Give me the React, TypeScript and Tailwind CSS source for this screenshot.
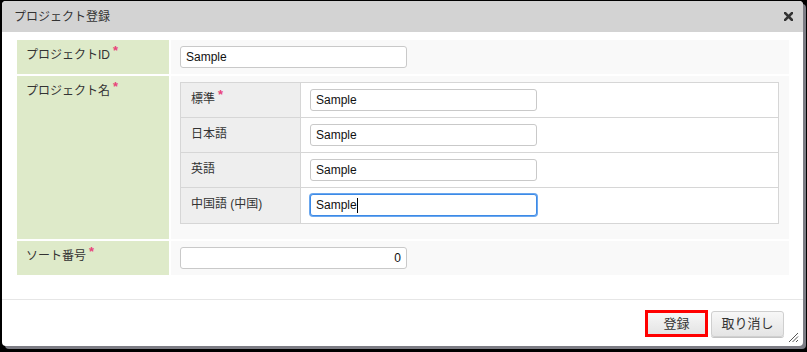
import React from "react";

const FONT = { fontFamily: '"Liberation Sans", "Noto Sans CJK JP", sans-serif' };

function Star() {
  return (
    <span className="relative -top-[4px] ml-[3px] text-[13px] font-bold text-[#e8447a] leading-none">*</span>
  );
}

function TextBox({ value, focused, right }: { value: string; focused?: boolean; right?: boolean }) {
  return (
    <div
      className={
        "w-[227px] h-[22px] rounded-[3px] bg-white px-[5px] text-[12px] text-[#111] flex items-center " +
        (focused
          ? "border border-[#3d8ae6] shadow-[0_0_0_1px_#6aa7ef]"
          : "border border-[#c9c9c9]") +
        (right ? " justify-end" : "")
      }
    >
      <span>{value}</span>
      {focused && <span className="inline-block w-[1px] h-[15px] bg-black" />}
    </div>
  );
}

function NameRow({ label, value, required, focused, last }: { label: string; value: string; required?: boolean; focused?: boolean; last?: boolean }) {
  return (
    <div className={"flex h-[35px] " + (last ? "" : "border-b border-[#d6d6d6]")}>
      <div className="w-[120px] bg-[#eeeeee] border-r border-[#d6d6d6] pl-[10px] pt-[7px] text-[12px] leading-[18px] text-[#333]">
        {label}
        {required && <Star />}
      </div>
      <div className="flex-1 bg-white pl-[9px] pt-[6px]">
        <TextBox value={value} focused={focused} />
      </div>
    </div>
  );
}

export default function App() {
  return (
    <div className="w-[807px] h-[352px] bg-black pl-[2px] pt-[1px]" style={FONT}>
      <div className="relative w-[801px] h-[345px] bg-white rounded-[4px] shadow-[3px_3px_0_#7c7c84] flex flex-col">
        <div className="h-[31px] bg-[#d3d3d3] rounded-t-[4px] flex items-center justify-between pl-[12px] pr-[10px]">
          <span className="text-[12px] text-[#333]">プロジェクト登録</span>
          <svg width="9" height="9" viewBox="0 0 9 9">
            <path d="M1 1L8 8M8 1L1 8" stroke="#333" strokeWidth="2.6" strokeLinecap="square" />
          </svg>
        </div>

        <div className="flex-1 pl-[15px] pr-[14px] pt-[8px] flex flex-col gap-[2px]">
          <div className="flex h-[34px] gap-[2px]">
            <div className="w-[152px] bg-[#deeac9] pl-[9px] pt-[6px] text-[12px] leading-[18px] text-[#333]">
              プロジェクトID<Star />
            </div>
            <div className="flex-1 bg-[#f9f9f9] pl-[9px] pt-[6px]">
              <TextBox value="Sample" />
            </div>
          </div>

          <div className="flex h-[163px] gap-[2px]">
            <div className="w-[152px] bg-[#deeac9] pl-[9px] pt-[6px] text-[12px] leading-[18px] text-[#333]">
              プロジェクト名<Star />
            </div>
            <div className="flex-1 bg-[#f9f9f9] pl-[9px] pr-[10px] pt-[6px]">
              <div className="border border-[#d6d6d6] flex flex-col">
                <NameRow label="標準" value="Sample" required />
                <NameRow label="日本語" value="Sample" />
                <NameRow label="英語" value="Sample" />
                <NameRow label="中国語 (中国)" value="Sample" focused last />
              </div>
            </div>
          </div>

          <div className="flex h-[34px] gap-[2px]">
            <div className="w-[152px] bg-[#deeac9] pl-[9px] pt-[6px] text-[12px] leading-[18px] text-[#333]">
              ソート番号<Star />
            </div>
            <div className="flex-1 bg-[#f9f9f9] pl-[9px] pt-[6px]">
              <TextBox value="0" right />
            </div>
          </div>
        </div>

        <div className="h-[47px] border-t border-[#e6e6e6] flex justify-end items-start pt-[10px] pr-[19px] gap-[3px]">
          <div className="w-[63px] h-[27px] border-[3px] border-[#ff0000] bg-gradient-to-b from-[#f7f7f7] to-[#e4e4e4] flex items-center justify-center text-[13px] text-[#333]">
            登録
          </div>
          <div className="w-[73px] h-[26px] mt-[1px] rounded-[3px] border border-[#cfcfcf] bg-gradient-to-b from-[#f7f7f7] to-[#e4e4e4] shadow-[0_1px_0_#c4c4c4] flex items-center justify-center text-[13px] text-[#333]">
            取り消し
          </div>
        </div>

        <svg className="absolute right-[4px] bottom-[3px]" width="11" height="11" viewBox="0 0 11 11">
          <path d="M1 10L10 1M4.5 10L10 4.5M8 10L10 8" stroke="#555" strokeWidth="1" />
        </svg>
      </div>
    </div>
  );
}
